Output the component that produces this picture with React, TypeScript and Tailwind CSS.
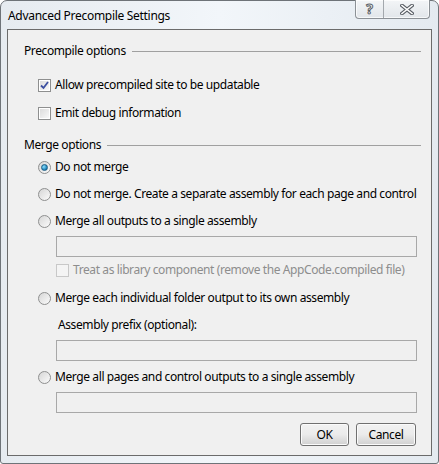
import type { ReactNode } from 'react'

const FONT = { fontFamily: '"Noto Sans", "Segoe UI", sans-serif' }

function GroupHeader({ label }: { label: string }) {
  return (
    <div className="flex items-center h-[16px] pr-[10px]">
      <span className="text-[12px] tracking-[-0.4px] text-black whitespace-nowrap">{label}</span>
      <div className="flex-1 h-px bg-[#a0a0a0] ml-[6px]" />
    </div>
  )
}

function CheckBox({ checked, disabled }: { checked?: boolean; disabled?: boolean }) {
  return (
    <div
      className={
        disabled
          ? 'w-[13px] h-[13px] border border-[#c8c8c8] bg-[#f4f4f4] shrink-0'
          : 'w-[13px] h-[13px] border border-[#8e8f8f] bg-white p-px shrink-0'
      }
    >
      {!disabled && (
        <div className="w-full h-full bg-gradient-to-br from-[#dcdcdc] to-[#f8f8f8] flex items-center justify-center">
          {checked && (
            <svg width="9" height="9" viewBox="0 0 9 9">
              <path d="M1 4.5 L3.5 7 L8 1" fill="none" stroke="#3c4fa0" strokeWidth="1.8" />
            </svg>
          )}
        </div>
      )}
    </div>
  )
}

function Radio({ checked }: { checked?: boolean }) {
  return (
    <div className="w-[13px] h-[13px] rounded-full border border-[#8e8f8f] bg-gradient-to-br from-[#d6d6d6] to-[#fbfbfb] flex items-center justify-center shrink-0">
      {checked && (
        <div className="w-[7px] h-[7px] rounded-full bg-[radial-gradient(circle_at_35%_35%,#8ce0ff,#1b7fb5_70%,#0c5b8a)] border border-[#1d5f86]" />
      )}
    </div>
  )
}

function OptionRow({ control, children, muted }: { control: ReactNode; children: ReactNode; muted?: boolean }) {
  return (
    <div className="flex items-center h-[16px] gap-[4px]">
      {control}
      <span
        className={
          muted
            ? 'text-[12px] tracking-[-0.4px] text-[#8d8d8d] whitespace-nowrap'
            : 'text-[12px] tracking-[-0.4px] text-black whitespace-nowrap'
        }
      >
        {children}
      </span>
    </div>
  )
}

function TextBox() {
  return <div className="h-[21px] w-[361px] border border-[#a8a8a8] bg-[#f0f0f0]" />
}

function Button({ label, width }: { label: string; width: string }) {
  return (
    <div
      className={`${width} h-[23px] rounded-[3px] border border-[#707070] bg-gradient-to-b from-[#f2f2f2] via-[#ebebeb] to-[#d0d0d0] flex items-center justify-center text-[12px] tracking-[-0.4px] text-black shadow-[inset_0_0_0_1px_#fbfbfb]`}
    >
      {label}
    </div>
  )
}

export default function App() {
  return (
    <div style={FONT} className="w-[439px] h-[464px] bg-white">
      <div className="w-[439px] h-[464px] rounded-t-[7px] rounded-b-[3px] border border-[#6e7378] bg-gradient-to-r from-[#e6ebf0] via-[#f2f6fa] to-[#e4eaf0] flex flex-col">
        {/* title bar */}
        <div className="h-[28px] flex items-start pl-[7px] pr-[8px]">
          <span className="text-[12px] tracking-[-0.3px] text-black mt-[6px] whitespace-nowrap">Advanced Precompile Settings</span>
          <div className="flex-1" />
          <div className="flex h-[19px] -mt-px border border-t-0 border-[#8c9196] rounded-b-[4px] bg-gradient-to-b from-[#f3f5f7] to-[#e2e6ea] shadow-[inset_0_0_0_1px_rgba(255,255,255,0.7)]">
            <div className="w-[28px] flex items-center justify-center border-r border-[#a3a8ad]">
              <span className="text-[14px] font-bold text-white leading-none [-webkit-text-stroke:1px_#5a5f66]">?</span>
            </div>
            <div className="w-[45px] flex items-center justify-center">
              <svg width="14" height="11" viewBox="0 0 14 11">
                <path d="M2 1.5 L12 9.5 M12 1.5 L2 9.5" stroke="#5a5f66" strokeWidth="3.6" strokeLinecap="square" />
                <path d="M2 1.5 L12 9.5 M12 1.5 L2 9.5" stroke="#ffffff" strokeWidth="1.6" strokeLinecap="square" />
              </svg>
            </div>
          </div>
        </div>

        {/* client area */}
        <div className="mx-[6px] mb-[7px] flex-1 border border-[#6b6b6b] bg-[#f0f0f0] pl-[16px] flex flex-col">
          <div className="mt-[13px]">
            <GroupHeader label="Precompile options" />
          </div>
          <div className="pl-[14px] flex flex-col">
            <div className="mt-[18px]">
              <OptionRow control={<CheckBox checked />}>Allow precompiled site to be updatable</OptionRow>
            </div>
            <div className="mt-[12px]">
              <OptionRow control={<CheckBox />}>Emit debug information</OptionRow>
            </div>
          </div>

          <div className="mt-[16px]">
            <GroupHeader label="Merge options" />
          </div>
          <div className="pl-[14px] flex flex-col">
            <div className="mt-[6px]">
              <OptionRow control={<Radio checked />}>Do not merge</OptionRow>
            </div>
            <div className="mt-[11px]">
              <OptionRow control={<Radio />}>Do not merge. Create a separate assembly for each page and control</OptionRow>
            </div>
            <div className="mt-[11px]">
              <OptionRow control={<Radio />}>Merge all outputs to a single assembly</OptionRow>
            </div>
            <div className="pl-[18px] flex flex-col">
              <div className="mt-[7px]">
                <TextBox />
              </div>
              <div className="mt-[5px]">
                <OptionRow muted control={<CheckBox disabled />}>
                  Treat as library component (remove the AppCode.compiled file)
                </OptionRow>
              </div>
            </div>
            <div className="mt-[12px]">
              <OptionRow control={<Radio />}>Merge each individual folder output to its own assembly</OptionRow>
            </div>
            <div className="pl-[18px] flex flex-col">
              <div className="mt-[11px] h-[16px] flex items-center pl-[2px]">
                <span className="text-[12px] tracking-[-0.4px] text-black whitespace-nowrap">Assembly prefix (optional):</span>
              </div>
              <div className="mt-[7px]">
                <TextBox />
              </div>
            </div>
            <div className="mt-[8px]">
              <OptionRow control={<Radio />}>Merge all pages and control outputs to a single assembly</OptionRow>
            </div>
            <div className="pl-[18px] flex flex-col">
              <div className="mt-[7px]">
                <TextBox />
              </div>
            </div>
          </div>

          <div className="mt-[10px] flex justify-end gap-[7px] pr-[15px]">
            <Button label="OK" width="w-[49px]" />
            <Button label="Cancel" width="w-[60px]" />
          </div>
        </div>
      </div>
    </div>
  )
}
